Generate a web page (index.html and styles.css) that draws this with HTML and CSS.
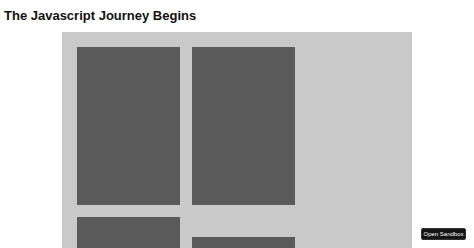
FILE: index.html
```html
<!DOCTYPE html>
<html>
<head>
<meta charset="utf-8">
<link rel="stylesheet" href="styles.css">
</head>
<body>
<h1 class="title">The Javascript Journey Begins</h1>
<div class="stage">
  <div class="column">
    <div class="block"></div>
    <div class="block"></div>
  </div>
  <div class="column">
    <div class="block"></div>
    <div class="block offset"></div>
  </div>
</div>
<a class="sandbox-btn" href="#">Open Sandbox</a>
</body>
</html>
```
FILE: styles.css
```css
html, body {
  margin: 0;
  padding: 0;
  background: #ffffff;
  overflow: hidden;
  height: 248px;
}
body {
  font-family: "Liberation Sans", Arial, sans-serif;
}
.title {
  margin: 0;
  padding: 8px 4px 0 4px;
  height: 24px;
  font-size: 13px;
  line-height: 16px;
  font-weight: bold;
  color: #111;
}
.stage {
  width: 320px;
  margin: 0 auto;
  background: #c9c9c9;
  padding: 15px 15px 0 15px;
  height: 201px;
  overflow: hidden;
  display: flex;
  gap: 12px;
}
.column {
  width: 103px;
  display: flex;
  flex-direction: column;
  gap: 12px;
}
.block {
  height: 158px;
  background: #5a5a5a;
  flex: none;
}
.block.offset {
  margin-top: 20px;
}
.sandbox-btn {
  position: fixed;
  right: 8px;
  bottom: 8px;
  width: 45px;
  height: 12px;
  box-sizing: border-box;
  background: #151515;
  border: 1px solid #333;
  border-radius: 2px;
  color: #fff;
  font-size: 6px;
  line-height: 10px;
  text-align: center;
  text-decoration: none;
}
```
